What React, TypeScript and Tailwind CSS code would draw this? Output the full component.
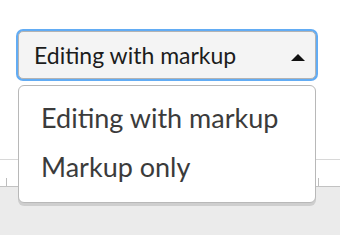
export default function App() {
  return (
    <div className="relative w-[340px] h-[236px] overflow-hidden bg-white font-['Lato',sans-serif]">
      {/* select */}
      <div className="pt-[31px] pl-[18px]">
        <button className="flex h-[48px] w-[298px] items-center justify-between rounded-[5px] border border-[#b3b3b3] bg-[#f4f4f4] pl-[15px] pr-[10px] text-[23px] text-[#1c1c1c] ring-2 ring-[#62acf4]">
          <span>Editing with markup</span>
          <svg width="14" height="7" viewBox="0 0 14 7" className="mt-[5px]">
            <path d="M0 7 L7 0 L14 7 Z" fill="#111" />
          </svg>
        </button>
      </div>

      {/* ruler underneath */}
      <div className="mt-[80px] flex h-[27px] items-end justify-between border-t border-[#d8d8d8] pl-[6px] pr-[21px]">
        <div className="h-[8px] w-px bg-[#bdbdbd]" />
        <div className="h-[8px] w-px bg-[#bdbdbd]" />
      </div>
      <div className="h-[49px] border-t border-[#c2c2c2] bg-[#ebebeb]" />

      {/* menu */}
      <div className="absolute left-[18px] top-[85px] w-[298px] rounded-[6px] border border-[#b8b8b8] bg-white pt-[8px] pb-[10px] text-[27px] text-[#3b3b3b] shadow-[0_3px_0_rgba(0,0,0,0.12)]">
        <div className="flex h-[49px] items-center px-[22px]">Editing with markup</div>
        <div className="flex h-[49px] items-center px-[22px]">Markup only</div>
      </div>
    </div>
  );
}
